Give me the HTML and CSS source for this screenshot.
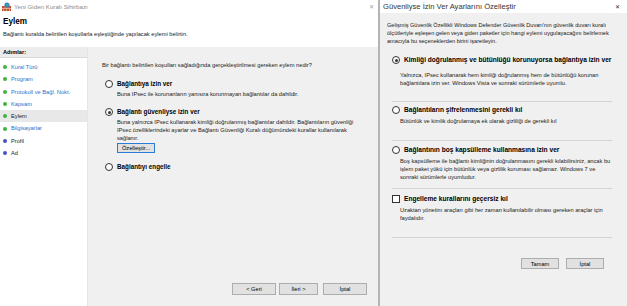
FILE: index.html
```html
<!DOCTYPE html>
<html lang="tr">
<head>
    <meta charset="UTF-8">
    <title>Yeni Giden Kuralı Sihirbazı</title>
    <link rel="stylesheet" href="styles.css">
</head>
<body>
    <div class="wizard">
        <div class="titlebar">
            <svg class="app-icon" width="9" height="9" viewBox="0 0 9 9">
                <rect x="0" y="4" width="9" height="5" fill="#c0502a"/>
                <path d="M0 6.5h9M3 4v2.5M6 4v2.5M1.5 6.5V9M4.5 6.5V9M7.5 6.5V9" stroke="#f3d2b8" stroke-width="0.6"/>
                <circle cx="5" cy="3" r="2.6" fill="#2e7fd0"/>
                <path d="M3.4 2.2c1 .5 2 .2 3.2-.4M4.6 4.6c.3-.8 1-1.2 1.9-1" stroke="#62c04a" stroke-width="0.8" fill="none"/>
            </svg>
            <span class="title-text">Yeni Giden Kuralı Sihirbazı</span>
            <span class="close">✕</span>
        </div>
        <div class="header">
            <div class="page-title">Eylem</div>
            <div class="page-desc">Bağlantı kuralda belirtilen koşullarla eşleştiğinde yapılacak eylemi belirtin.</div>
        </div>
        <div class="wizard-body">
            <div class="steps">
                <div class="steps-head">Adımlar:</div>
                <div class="step done"><span class="dot green"></span>Kural Türü</div>
                <div class="step done"><span class="dot green"></span>Program</div>
                <div class="step done"><span class="dot green"></span>Protokoll ve Bağl. Nokt.</div>
                <div class="step done"><span class="dot green"></span>Kapsam</div>
                <div class="step current"><span class="dot green"></span>Eylem</div>
                <div class="step done"><span class="dot green"></span>Bilgisayarlar</div>
                <div class="step"><span class="dot blue"></span>Profil</div>
                <div class="step"><span class="dot blue"></span>Ad</div>
            </div>
            <div class="main">
                <div class="question">Bir bağlantı belirtilen koşulları sağladığında gerçekleştirilmesi gereken eylem nedir?</div>

                <div class="choice choice-first">
                    <div class="choice-label"><span class="radio"></span>Bağlantıya izin ver</div>
                    <div class="choice-desc">Buna IPsec ile korunanların yanısıra korunmayan bağlantılar da dahildir.</div>
                </div>

                <div class="choice">
                    <div class="choice-label"><span class="radio checked"></span>Bağlantı güvenliyse izin ver</div>
                    <div class="choice-desc">Buna yalnızca IPsec kullanarak kimliği doğrulanmış bağlantılar dahildir. Bağlantıların güvenliği<br>IPsec özelliklerindeki ayarlar ve Bağlantı Güvenliği Kuralı düğümündeki kurallar kullanılarak<br>sağlanır.</div>
                    <button class="btn btn-focus">Özelleştir...</button>
                </div>

                <div class="choice choice-last">
                    <div class="choice-label"><span class="radio"></span>Bağlantıyı engelle</div>
                </div>

                <div class="nav-buttons">
                    <button class="btn nav-btn">&lt; Geri</button>
                    <button class="btn nav-btn next">İleri &gt;</button>
                    <button class="btn nav-btn cancel">İptal</button>
                </div>
            </div>
        </div>
    </div>

    <div class="dialog">
        <div class="dialog-titlebar">
            <span class="dialog-title">Güvenliyse İzin Ver Ayarlarını Özelleştir</span>
            <span class="close dark">✕</span>
        </div>
        <div class="dialog-body">
            <div class="intro">Gelişmiş Güvenlik Özellikli Windows Defender Güvenlik Duvarı'nın güvenlik duvarı kuralı<br>ölçütleriyle eşleşen gelen veya giden paketler için hangi eylemi uygulayacağını belirlemek<br>amacıyla bu seçeneklerden birini işaretleyin.</div>

            <div class="options">
                <div class="opt opt-1">
                    <div class="choice-label"><span class="radio checked"></span>Kimliği doğrulanmış ve bütünlüğü korunuyorsa bağlantıya izin ver</div>
                    <div class="opt-desc">Yalnızca, IPsec kullanarak hem kimliği doğrulanmış hem de bütünlüğü korunan<br>bağlantılara izin ver. Windows Vista ve sonraki sürümlerle uyumlu.</div>
                </div>
                <div class="sep sep-1"></div>
                <div class="opt opt-2">
                    <div class="choice-label"><span class="radio"></span>Bağlantıların şifrelenmesini gerekli kıl</div>
                    <div class="opt-desc">Bütünlük ve kimlik doğrulamaya ek olarak gizliliği de gerekli kıl</div>
                </div>
                <div class="sep sep-2"></div>
                <div class="opt opt-3">
                    <div class="choice-label"><span class="radio"></span>Bağlantının boş kapsülleme kullanmasına izin ver</div>
                    <div class="opt-desc">Boş kapsülleme ile bağlantı kimliğinin doğrulanmasını gerekli kılabilirsiniz, ancak bu<br>işlem paket yükü için bütünlük veya gizlilik koruması sağlamaz. Windows 7 ve<br>sonraki sürümlerle uyumludur.</div>
                </div>
                <div class="sep sep-3"></div>
                <div class="opt opt-4">
                    <div class="choice-label"><span class="checkbox"></span>Engelleme kurallarını geçersiz kıl</div>
                    <div class="opt-desc">Uzaktan yönetim araçları gibi her zaman kullanılabilir olması gereken araçlar için<br>faydalıdır.</div>
                </div>
                <div class="sep sep-4"></div>
            </div>

            <div class="dialog-buttons">
                <button class="btn dlg-btn">Tamam</button>
                <button class="btn dlg-btn">İptal</button>
            </div>
        </div>
    </div>
</body>
</html>
```

FILE: styles.css
```css
html, body {
    margin: 0;
    padding: 0;
}
body {
    width: 627px;
    height: 306px;
    overflow: hidden;
    display: flex;
    background-color: #f0f0f0;
    font-family: "Liberation Sans", Arial, sans-serif;
    font-size: 5.7px;
    color: #1a1a1a;
}

/* left wizard window */
.wizard {
    width: 378px;
    display: flex;
    flex-direction: column;
}
.titlebar {
    height: 13px;
    background-color: #fff;
    display: flex;
    align-items: center;
    padding-left: 2px;
}
.app-icon {
    margin-right: 3px;
}
.title-text {
    font-size: 6.2px;
    color: #8a8a8a;
    flex: 1;
}
.close {
    font-size: 6px;
    color: #a0a0a0;
    width: 14px;
    text-align: center;
}
.close.dark {
    color: #333;
    width: 20px;
}
.header {
    background-color: #fff;
    padding: 4px 0 9px 3px;
}
.page-title {
    font-weight: bold;
    font-size: 8.2px;
    line-height: 10px;
    color: #000;
}
.page-desc {
    margin-top: 3px;
    line-height: 8px;
}
.wizard-body {
    flex: 1;
    display: flex;
}
.steps {
    width: 87px;
    background-color: #fff;
    border-right: 1px solid #e6e6e6;
}
.steps-head {
    font-weight: bold;
    height: 10px;
    line-height: 10px;
    padding-left: 3px;
    background-color: #ececec;
    border-bottom: 1px solid #d9d9d9;
    margin-bottom: 3px;
    color: #000;
}
.step {
    height: 12.3px;
    line-height: 12.3px;
    display: flex;
    align-items: center;
    padding-left: 3px;
    color: #222;
}
.step.done {
    color: #2a6fc9;
}
.step.current {
    background-color: #e8e8e8;
    color: #222;
}
.dot {
    width: 4px;
    height: 4px;
    border-radius: 50%;
    margin-right: 4px;
}
.dot.green {
    background-color: #3eb43e;
}
.dot.blue {
    background-color: #4a4fc4;
}
.main {
    flex: 1;
    display: flex;
    flex-direction: column;
    padding: 14px 11px 11px 14px;
}
.question {
    line-height: 8px;
}
.choice {
    padding-left: 3px;
    margin-top: 10px;
}
.choice-first {
    margin-top: 11px;
}
.choice-label {
    display: flex;
    align-items: center;
    font-weight: bold;
    font-size: 6.3px;
    line-height: 8px;
    color: #000;
}
.radio {
    width: 6px;
    height: 6px;
    border: 1px solid #333;
    border-radius: 50%;
    background-color: #fff;
    margin-right: 4px;
    position: relative;
}
.radio.checked::after {
    content: "";
    position: absolute;
    left: 1.5px;
    top: 1.5px;
    width: 3px;
    height: 3px;
    border-radius: 50%;
    background-color: #333;
}
.checkbox {
    width: 6px;
    height: 6px;
    border: 1px solid #333;
    background-color: #fff;
    margin-right: 4px;
}
.choice-desc {
    padding-left: 12px;
    margin-top: 2px;
    line-height: 8px;
}
.btn {
    font-family: inherit;
    font-size: 5.7px;
    color: #000;
    background-color: #e1e1e1;
    border: 1px solid #adadad;
    padding: 0;
    height: 10px;
}
.btn-focus {
    margin: 1px 0 0 12px;
    width: 38px;
    border-color: #2a7ad8;
}
.choice-last {
    margin-top: 10px;
}
.nav-buttons {
    margin-top: auto;
    display: flex;
    justify-content: flex-end;
}
.nav-btn {
    width: 44px;
    height: 12px;
}
.nav-btn.next {
    width: 39px;
    margin-left: 3px;
}
.nav-btn.cancel {
    margin-left: 5px;
}

/* right dialog */
.dialog {
    flex: 1;
    border-left: 2px solid #b4b4b4;
    display: flex;
    flex-direction: column;
}
.dialog-titlebar {
    height: 13px;
    background-color: #fff;
    display: flex;
    align-items: center;
    padding-left: 3px;
}
.dialog-title {
    font-size: 7.6px;
    color: #333;
    flex: 1;
}
.dialog-body {
    flex: 1;
    padding-top: 8px;
}
.intro {
    padding-left: 7px;
    line-height: 8px;
    font-size: 5.6px;
}
.options {
    padding-left: 12px;
    margin-right: 15px;
}
.options .choice-label {
    font-size: 6.6px;
}
.opt-desc {
    padding-left: 8px;
    line-height: 8px;
}
.opt-1 {
    margin-top: 11px;
}
.opt-1 .opt-desc {
    margin-top: 7px;
}
.opt-2 {
    margin-top: 4px;
}
.opt-2 .opt-desc,
.opt-3 .opt-desc,
.opt-4 .opt-desc {
    margin-top: 3px;
}
.opt-3 {
    margin-top: 5px;
}
.opt-4 {
    margin-top: 6px;
}
.sep {
    height: 1px;
    background-color: #d4d4d4;
}
.sep-1 {
    margin-top: 14px;
}
.sep-2 {
    margin-top: 15px;
}
.sep-3 {
    margin-top: 7px;
}
.sep-4 {
    margin-top: 15px;
}
.dialog-buttons {
    display: flex;
    justify-content: flex-end;
    gap: 7px;
    margin-top: 20px;
    padding-right: 23px;
}
.dlg-btn {
    width: 38px;
    height: 11px;
}
```
